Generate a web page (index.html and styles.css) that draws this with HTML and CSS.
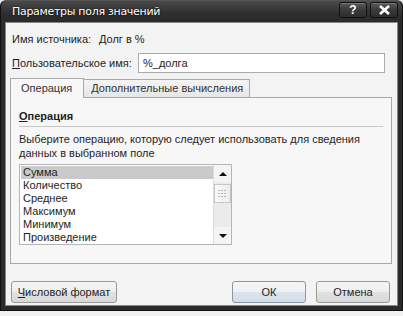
FILE: index.html
```html
<!DOCTYPE html>
<html>
  <head>
    <link rel="stylesheet" href="styles.css">
  </head>
  <body>
    <div class="window">
      <div class="titlebar">
        <span class="title">Параметры поля значений</span>
        <div class="caption-buttons">
          <span class="caption-btn">?</span>
          <span class="caption-btn">
            <svg width="13" height="10" viewBox="0 0 13 10">
              <path d="M2 1 L11 9 M11 1 L2 9" stroke="#fff" stroke-width="2.6" />
            </svg>
          </span>
        </div>
      </div>

      <div class="client">
        <div class="field-row">
          <span class="field-label">Имя источника:</span>
          <span class="field-value">Долг в %</span>
        </div>
        <div class="field-row">
          <span class="field-label"><u>П</u>ользовательское имя:</span>
          <input class="name-input" type="text" value="%_долга" />
        </div>

        <div class="tabs">
          <span class="tab active">Операция</span>
          <span class="tab">Дополнительные вычисления</span>
        </div>
        <div class="tab-panel">
          <div class="group-title"><u>О</u>перация</div>
          <p class="hint">
            Выберите операцию, которую следует использовать для сведения
            данных в выбранном поле
          </p>
          <div class="listbox">
            <ul class="items">
              <li class="selected">Сумма</li>
              <li>Количество</li>
              <li>Среднее</li>
              <li>Максимум</li>
              <li>Минимум</li>
              <li>Произведение</li>
            </ul>
            <div class="scrollbar">
              <span class="arrow up"></span>
              <div class="track">
                <span class="thumb">
                  <svg width="9" height="7" viewBox="0 0 9 7">
                    <path d="M0 0h2v1H0zM3 0h2v1H3zM6 0h2v1H6zM0 3h2v1H0zM3 3h2v1H3zM6 3h2v1H6zM0 6h2v1H0zM3 6h2v1H3zM6 6h2v1H6z" fill="#b8b8b8" />
                  </svg>
                </span>
              </div>
              <span class="arrow down"></span>
            </div>
          </div>
        </div>

        <div class="footer">
          <button class="btn wide"><u>Ч</u>исловой формат</button>
          <div class="spacer"></div>
          <button class="btn default">ОК</button>
          <button class="btn">Отмена</button>
        </div>
      </div>
    </div>
    <div class="sheet"></div>
  </body>
</html>
```

FILE: styles.css
```css
body {
  margin: 0;
  width: 403px;
  height: 316px;
  overflow: hidden;
  font-family: "Liberation Sans", Arial, sans-serif;
  font-size: 11px;
  color: #1e1e1e;
  background: #e8e8e8;
}

.window {
  height: 305px;
  background: #2b2b2b;
  border: 1px solid #111;
  border-top-color: #555;
  border-radius: 6px 6px 0 0;
  padding: 0 4px 4px 4px;
  display: flex;
  flex-direction: column;
}

.titlebar {
  height: 21px;
  display: flex;
  align-items: center;
  justify-content: space-between;
  background: linear-gradient(#4a4a4a, #2e2e2e 60%, #2a2a2a);
  margin: 0 -4px;
  padding: 0 4px 0 11px;
  border-radius: 6px 6px 0 0;
}

.title {
  color: #fff;
  font-family: "DejaVu Sans", sans-serif;
  font-size: 11px;
  letter-spacing: -0.3px;
  text-shadow: 0 0 2px #000;
}

.caption-buttons {
  display: flex;
  gap: 3px;
  margin-top: -4px;
}

.caption-btn {
  width: 26px;
  height: 14px;
  border: 1px solid #111;
  border-radius: 3px;
  background: linear-gradient(#5a5a5a, #3a3a3a 50%, #2e2e2e);
  box-shadow: inset 0 1px 0 #777;
  color: #fff;
  font-weight: bold;
  font-size: 12px;
  line-height: 14px;
  display: flex;
  align-items: center;
  justify-content: center;
}

.client {
  flex: 1;
  background: #f3f3f3;
  border: 1px solid #888;
  padding: 4px 5px 0 4px;
  display: flex;
  flex-direction: column;
}

.field-row {
  display: flex;
  align-items: center;
  height: 24px;
  padding-left: 2px;
}

.field-label {
  width: 87px;
  flex: none;
}

.field-row:nth-child(2) .field-label {
  width: 126px;
}

.name-input {
  width: 247px;
  height: 20px;
  box-sizing: border-box;
  border: 1px solid #ababab;
  background: #fff;
  font-family: inherit;
  font-size: 11px;
  padding: 0 4px;
  margin: 0;
  color: #1e1e1e;
}

.tabs {
  display: flex;
  align-items: flex-end;
  margin-top: 3px;
  height: 19px;
}

.tab {
  border: 1px solid #a9a9a9;
  border-bottom: none;
  background: linear-gradient(#f4f4f4, #e6e6e6);
  padding: 2px 6px 0 7px;
  height: 15px;
  color: #333;
  margin-left: -1px;
}

.tab.active {
  padding: 3px 11px 0 10px;
  background: #f7f7f7;
  position: relative;
  z-index: 1;
  margin-bottom: -1px;
  margin-left: 0;
  box-sizing: border-box;
  height: 20px;
}

.tab:last-child {
  width: 152px;
}

.tab-panel {
  height: 167px;
  box-sizing: border-box;
  border: 1px solid #a9a9a9;
  background: #f7f7f7;
  padding: 8px 8px 0 8px;
}

.group-title {
  font-weight: bold;
  padding: 4px 0 4px 0;
  border-bottom: 1px solid #c8c8c8;
}

.hint {
  margin: 5px 0 4px 0;
  line-height: 14px;
}

.listbox {
  width: 213px;
  height: 81px;
  box-sizing: border-box;
  border: 1px solid #b5b5b5;
  background: #fff;
  display: flex;
}

.items {
  list-style: none;
  margin: 0;
  padding: 1px 0 0 1px;
  flex: 1;
  overflow: hidden;
}

.items li {
  height: 13px;
  line-height: 13px;
  padding-left: 2px;
}

.items li.selected {
  background: #cacaca;
}

.scrollbar {
  width: 17px;
  flex: none;
  display: flex;
  flex-direction: column;
  background: #ebebeb;
  border-left: 1px solid #dcdcdc;
}

.arrow {
  height: 17px;
  display: flex;
  align-items: center;
  justify-content: center;
  background: #f4f4f4;
}

.arrow::before {
  content: "";
  border-left: 4px solid transparent;
  border-right: 4px solid transparent;
}

.arrow.up::before {
  border-bottom: 4px solid #111;
}

.arrow.down::before {
  border-top: 4px solid #111;
}

.track {
  flex: 1;
  padding-top: 2px;
}

.thumb {
  display: flex;
  align-items: center;
  justify-content: center;
  height: 17px;
  border: 1px solid #c6c6c6;
  background: linear-gradient(90deg, #fbfbfb, #ececec);
}

.footer {
  display: flex;
  align-items: center;
  gap: 10px;
  padding: 17px 2px 0 1px;
}

.spacer {
  flex: 1;
}

.btn {
  height: 22px;
  width: 74px;
  border: 1px solid #9a9a9a;
  border-radius: 3px;
  background: linear-gradient(#f5f5f5, #eeeeee 50%, #e2e2e2 51%, #d8d8d8);
  font-family: inherit;
  font-size: 11px;
  color: #1e1e1e;
  padding: 0;
}

.btn.wide {
  width: 106px;
}

.btn.default {
  border-color: #8a98a8;
  background: linear-gradient(#f4f6f8, #eef1f4 50%, #dde4ec 51%, #d3dce6);
}

.sheet {
  height: 5px;
  background: #f0f0f0;
}
```
